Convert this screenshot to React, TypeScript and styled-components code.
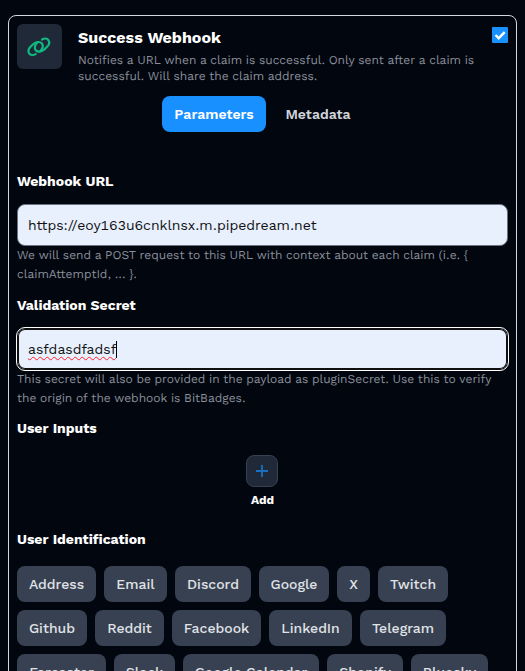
import React from "react";
import styled, { createGlobalStyle, css } from "styled-components";

const Global = createGlobalStyle`
  * { box-sizing: border-box; }
  html, body { margin: 0; background: #02060f; overflow: hidden; }
  body {
    font-family: "Work Sans", Inter, sans-serif;
    font-variant-numeric: tabular-nums;
    color: #fff;
  }
  button, input { font-family: inherit; }
`;

const Page = styled.main`
  height: 671px;
  overflow: hidden;
  padding: 15px 8px 0;
`;

const Card = styled.section`
  height: 760px;
  border: 1px solid #d4d7de;
  border-radius: 8px;
  padding: 8px;
`;

const Header = styled.header`
  display: flex;
  height: 72px;
`;

const Logo = styled.div`
  width: 45px;
  height: 45px;
  flex: none;
  border-radius: 6px;
  background: #1f2937;
  display: grid;
  place-items: center;
`;

const HeaderText = styled.div`
  flex: 1;
  margin-left: 16px;
  padding-top: 2px;
`;

const Text = styled.span`
  display: inline-block;
  white-space: pre;
`;

const Title = styled.h1`
  margin: 0 0 2px;
  font-size: 16px;
  line-height: 24px;
  font-weight: 700;
`;

const Note = styled.p<{ $line: number }>`
  margin: 0;
  color: #8b909b;
  font-size: 12px;
  line-height: ${(p) => p.$line}px;
  text-rendering: geometricPrecision;
  ${Text} { display: block; }
`;

const Check = styled.div`
  width: 16px;
  height: 16px;
  margin-top: 3px;
  flex: none;
  border-radius: 1px;
  background: #1890ff;
  display: grid;
  place-items: center;
`;

const Tabs = styled.nav`
  display: flex;
  justify-content: center;
  height: 36px;
`;

const Tab = styled.button<{ $active?: boolean; $w: number }>`
  width: ${(p) => p.$w}px;
  height: 36px;
  padding: 0;
  border: 0;
  border-radius: 8px;
  font-size: 14px;
  font-weight: 600;
  ${(p) => p.$active
    ? css`background: #1890ff; color: #fff;`
    : css`background: transparent; color: #d1d5db; margin-left: 7px;`}
`;

const Label = styled.h2<{ $top: number }>`
  margin: ${(p) => p.$top}px 0 0;
  font-size: 14px;
  line-height: 20px;
  height: 20px;
  font-weight: 700;
`;

const Field = styled.div<{ $focus?: boolean }>`
  display: flex;
  align-items: center;
  height: 42px;
  margin-top: 13px;
  padding-left: 10px;
  border: 1px solid #6b7280;
  border-radius: 8px;
  background: #e8f0fe;
  color: #101010;
  font-size: 14px;
  line-height: 20px;
  ${(p) => p.$focus && css`
    border: 1px solid #101010;
    outline: 1px solid #fff;
    box-shadow: inset 0 0 0 1px #101010;
  `}
`;

const Misspelt = styled(Text)`
  text-decoration: underline wavy #ff1f2a 1.2px;
  text-decoration-skip-ink: none;
  text-underline-offset: 2px;
`;

const Caret = styled.i`
  width: 1px;
  height: 17px;
  background: #000;
`;

const AddBlock = styled.div`
  display: flex;
  flex-direction: column;
  align-items: center;
  margin-top: 17px;
  height: 53px;
  font-size: 12px;
  line-height: 16px;
  font-weight: 700;
`;

const AddButton = styled.button`
  width: 32px;
  height: 32px;
  margin: 0 1px 5px 0;
  padding: 0;
  border: 1px solid #374151;
  border-radius: 8px;
  background: #1f2937;
  display: grid;
  place-items: center;
`;

const ChipRows = styled.div`
  display: grid;
  gap: 8px;
  margin-top: 17px;
`;

const ChipRow = styled.div`
  display: flex;
  gap: 8px;
`;

const Chip = styled.button<{ $w: number }>`
  width: ${(p) => p.$w}px;
  height: 36px;
  flex: none;
  padding: 0;
  border: 0;
  border-radius: 8px;
  background: #374151;
  color: #e0e3e8;
  font-size: 14px;
  font-weight: 500;
`;

const providers: [string, number][][] = [
  [["Address", 79], ["Email", 63], ["Discord", 76], ["Google", 70], ["X", 33], ["Twitch", 70]],
  [["Github", 70], ["Reddit", 69], ["Facebook", 89], ["LinkedIn", 83], ["Telegram", 86]],
  [["Farcaster", 89], ["Slack", 61], ["Google Calendar", 136], ["Shopify", 76], ["Bluesky", 77]],
];

const linkHalf =
  "M-3.2 7.3C-5.4 8.5-8.4 8.5-9.6 6.6C-10.9 4.6-10.2 1.8-8.3 0L-5.6-2.6C-3-4.9 .8-5.7 2.9-3.6C4.7-1.7 4.2 1.6 1.8 3.8";

/* Two interlocking chain links; the second is the first turned half way round. */
const ChainIcon = () => (
  <svg
    width="25"
    height="21"
    viewBox="-11.8 -10.8 25 21"
    fill="none"
    stroke="#10b981"
    strokeWidth="2.2"
    strokeLinecap="round"
  >
    <path d={linkHalf} />
    <path d={linkHalf} transform="rotate(180)" />
  </svg>
);

export default function App() {
  return (
    <Page>
      <Global />
      <Card>
        <Header>
          <Logo><ChainIcon /></Logo>
          <HeaderText>
            <Title><Text>Success Webhook</Text></Title>
            <Note $line={16}>
              <Text>Notifies a URL when a claim is successful. Only sent after a claim is</Text>
              <Text>successful. Will share the claim address.</Text>
            </Note>
          </HeaderText>
          <Check role="checkbox" aria-checked="true">
            <svg width="12" height="12" viewBox="0 0 12 12" fill="none">
              <path d="M1.5 6 4.7 9.2 10.7 3.2" stroke="#fff" strokeWidth="2.4" />
            </svg>
          </Check>
        </Header>
        <Tabs>
          <Tab $active $w={104}><Text>Parameters</Text></Tab>
          <Tab $w={90}><Text>Metadata</Text></Tab>
        </Tabs>

        <Label $top={39}><Text>Webhook URL</Text></Label>
        <Field><Text>https://eoy163u6cnklnsx.m.pipedream.net</Text></Field>
        <Note $line={19}>
          <Text>{"We will send a POST request to this URL with context about each claim (i.e. {"}</Text>
          <Text>{"claimAttemptId, ... }."}</Text>
        </Note>

        <Label $top={11}><Text>Validation Secret</Text></Label>
        <Field $focus><Misspelt>asfdasdfadsf</Misspelt><Caret /></Field>
        <Note $line={19}>
          <Text>This secret will also be provided in the payload as pluginSecret. Use this to verify</Text>
          <Text>the origin of the webhook is BitBadges.</Text>
        </Note>

        <Label $top={10}><Text>User Inputs</Text></Label>
        <AddBlock>
          <AddButton aria-label="Add">
            <svg width="12" height="12" viewBox="0 0 12 12">
              <path d="M0 6h12M6 0v12" stroke="#1890ff" strokeOpacity="0.68" strokeWidth="1.8" />
            </svg>
          </AddButton>
          <Text>Add</Text>
        </AddBlock>

        <Label $top={21}><Text>User Identification</Text></Label>
        <ChipRows>
          {providers.map((row, i) => (
            <ChipRow key={i}>
              {row.map(([name, w]) => (
                <Chip key={name} $w={w}><Text>{name}</Text></Chip>
              ))}
            </ChipRow>
          ))}
        </ChipRows>
      </Card>
    </Page>
  );
}
